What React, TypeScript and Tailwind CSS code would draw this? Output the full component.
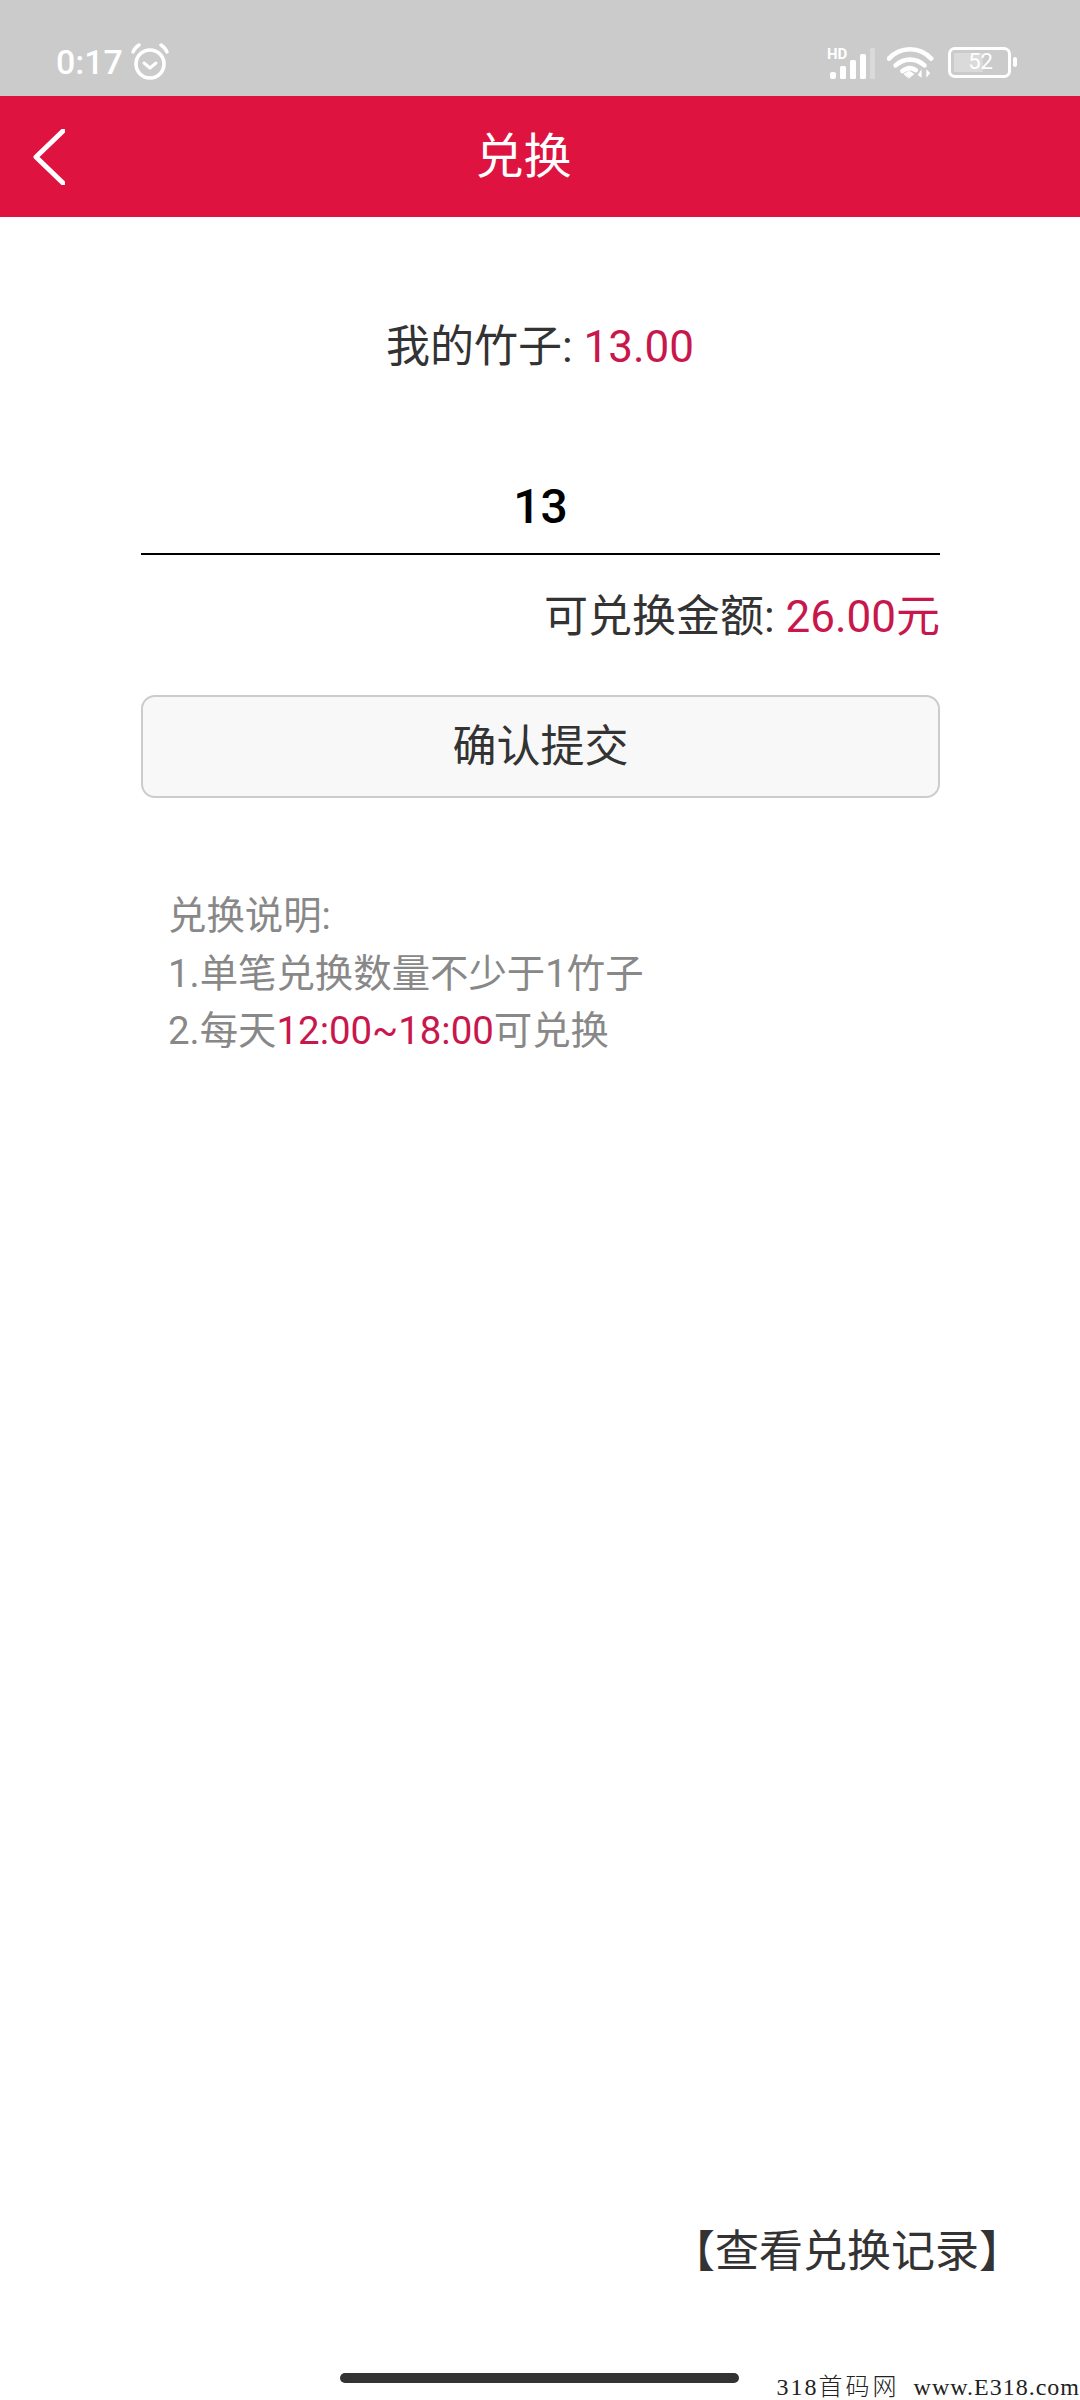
import React from "react";

const red = "text-[#c8174c]";

const AlarmIcon = () => (
  <svg width="38" height="38" viewBox="0 0 38 38" fill="none" stroke="#fff" strokeLinecap="round" strokeLinejoin="round">
    <circle cx="19" cy="21" r="14" strokeWidth="3.6" />
    <path d="M13 20l6 5 6-5" strokeWidth="3" />
    <path d="M2 9c1-3 3-5 6-7M36 9c-1-3-3-5-6-7" strokeWidth="3.4" />
  </svg>
);

const SignalIcon = () => (
  <svg width="52" height="34" viewBox="-2 -2 52 34" fill="#fff">
    <rect x="3" y="25" width="6" height="7" rx="2" />
    <rect x="13" y="19" width="6" height="13" rx="1.5" />
    <rect x="23" y="13" width="6" height="19" rx="1.5" />
    <rect x="33" y="7" width="6" height="25" rx="1.5" />
    <rect x="43" y="1" width="5" height="31" rx="1.5" opacity="0.3" />
    <text x="0" y="12" fontSize="15" fontWeight="700" fontFamily="Roboto, sans-serif">HD</text>
  </svg>
);

const WifiIcon = () => (
  <svg width="48" height="33" viewBox="0 0 50 34" fill="none" stroke="#fff" strokeWidth="4.8" strokeLinecap="round">
    <path d="M2 13C14 0 34 0 46 13" />
    <path d="M9 20c9-8 21-8 30 0" />
    <path d="M16 26c5-4 10-4 14-1" />
    <path d="M18 29l5-3 5 3-5 4z" fill="#fff" strokeWidth="1" />
    <path d="M36 33v-9l-4 6zM41 24v9l4-5z" fill="#fff" stroke="none" />
  </svg>
);

const BatteryIcon = () => (
  <div className="flex items-center gap-[2px]">
    <div className="w-[63px] h-[31px] rounded-[7px] border-[3px] border-white p-[3px] relative">
      <div className="h-full w-[29px] bg-white/30 rounded-[1px]" />
      <span className="absolute inset-0 flex items-center justify-center text-[22px] leading-none text-white pl-[2px]">52</span>
    </div>
    <div className="w-[4px] h-[10px] bg-white rounded-[2px]" />
  </div>
);

const App: React.FC = () => {
  return (
    <div className="relative w-[1080px] h-[2400px] flex flex-col bg-white font-['Roboto','Noto_Sans_CJK_SC',sans-serif] text-[#333]">
      {/* status bar */}
      <div className="h-[96px] bg-[#cbcbcb] flex items-start justify-between pl-[56px] pr-[63px] text-white">
        <div className="flex items-center gap-[8px] mt-[43px]">
          <span className="text-[34px] leading-[38px] font-medium">0:17</span>
          <AlarmIcon />
        </div>
        <div className="flex items-center mt-[45px]">
          <SignalIcon />
          <div className="ml-[10px] mr-[13px]">
            <WifiIcon />
          </div>
          <BatteryIcon />
        </div>
      </div>

      {/* header */}
      <div className="h-[121px] bg-[#de1340] flex items-center pl-[33px] pr-[98px] text-white">
        <svg width="32" height="56" viewBox="0 0 32 56" fill="none" stroke="#fff" strokeWidth="5" strokeLinecap="round" strokeLinejoin="round">
          <path d="M30 2L3 28l27 26" />
        </svg>
        <div className="flex-1 text-center text-[48px] leading-none">兑换</div>
      </div>

      <div className="mt-[103px] text-center text-[44px] leading-[54px]">
        我的竹子: <span className={red}>13.00</span>
      </div>

      {/* form */}
      <div className="ml-[141px] mr-[140px] mt-[78px] flex flex-col">
        <div className="h-[103px] pt-[8px] border-b-2 border-black flex items-center justify-center text-[48px] font-medium text-black">13</div>
        <div className="mt-[35px] text-right text-[44px] leading-[54px]">
          可兑换金额: <span className={red}>26.00元</span>
        </div>
        <button className="mt-[51px] h-[103px] rounded-[14px] border-2 border-[#cccccc] bg-[#f8f8f8] text-[44px] text-[#333]">确认提交</button>
      </div>

      {/* notes */}
      <div className="ml-[168px] mt-[89px] text-[38.4px] leading-[57.5px] text-[#888]">
        <div>兑换说明:</div>
        <div>1.单笔兑换数量不少于1竹子</div>
        <div>
          2.每天<span className={red}>12:00~18:00</span>可兑换
        </div>
      </div>

      <div className="mt-auto mb-[121px] mr-[57px] text-right text-[44px] leading-[54px]">【查看兑换记录】</div>

      {/* home indicator */}
      <div className="absolute left-[340px] top-[2373px] w-[399px] h-[10px] rounded-full bg-[#333]" />

      {/* watermark */}
      <div className="absolute right-0 bottom-0 h-[27px] flex items-center whitespace-pre text-[24px] leading-none text-[#222] font-['Liberation_Serif','Noto_Sans_CJK_SC',serif]">
        <span className="tracking-[2px]">318</span>
        <span className="tracking-[3px] font-light">首码网</span>
        <span className="tracking-[1px]">  www.E318.com</span>
      </div>
    </div>
  );
};

export default App;
